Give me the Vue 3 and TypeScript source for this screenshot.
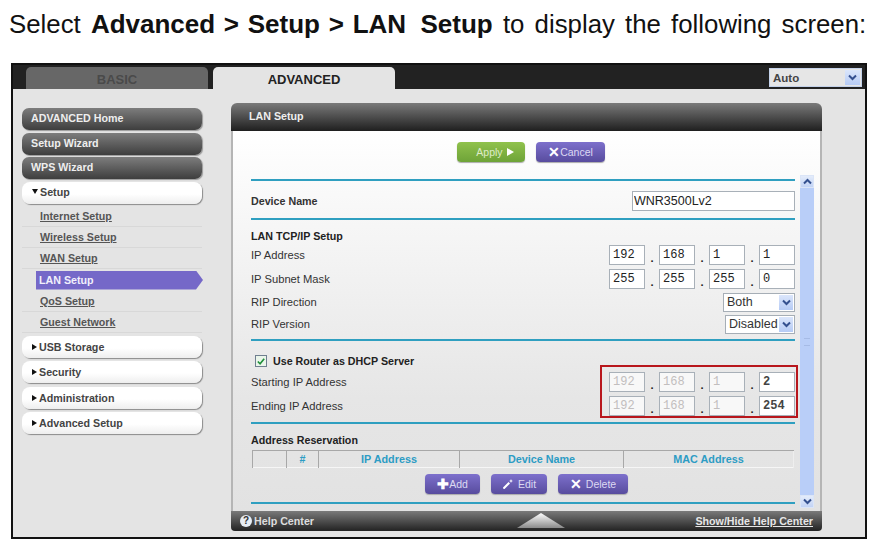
<script setup lang="ts">
const topLinks = ['ADVANCED Home', 'Setup Wizard', 'WPS Wizard']
const subLinks = ['Internet Setup', 'Wireless Setup', 'WAN Setup', 'LAN Setup', 'QoS Setup', 'Guest Network']
const closedGroups = ['USB Storage', 'Security', 'Administration', 'Advanced Setup']
const columns = ['', '#', 'IP Address', 'Device Name', 'MAC Address']

const ipRows = [
  { label: 'IP Address', octets: ['192', '168', '1', '1'] },
  { label: 'IP Subnet Mask', octets: ['255', '255', '255', '0'] }
]
const dhcpRows = [
  { label: 'Starting IP Address', octets: ['192', '168', '1', '2'] },
  { label: 'Ending IP Address', octets: ['192', '168', '1', '254'] }
]
const selectRows = [
  { label: 'RIP Direction', value: 'Both', width: 72 },
  { label: 'RIP Version', value: 'Disabled', width: 70 }
]
</script>

<template>
  <div class="page">
    <p class="intro">Select <b>Advanced &gt; Setup &gt; <span class="tight">LAN&nbsp; Setup</span></b> to display the following screen:</p>

    <div class="frame">
      <div class="topbar">
        <div class="tab tab-off">BASIC</div>
        <div class="tab tab-on">ADVANCED</div>
        <div class="lang">
          <span>Auto</span>
          <span class="chev"><svg width="9" height="7" viewBox="0 0 9 7"><path d="M1 1.5 4.5 5 8 1.5" fill="none" stroke="#34508f" stroke-width="2" /></svg></span>
        </div>
      </div>

      <div class="main">
        <nav class="side">
          <a v-for="l in topLinks" :key="l" class="pill-dark">{{ l }}</a>
          <div class="pill-light"><i class="arrow-down"></i>Setup</div>
          <ul class="subs">
            <li v-for="s in subLinks" :key="s" :class="{ current: s === 'LAN Setup' }">
              <span>{{ s }}</span>
            </li>
          </ul>
          <div v-for="g in closedGroups" :key="g" class="pill-light closed"><i class="arrow-right"></i>{{ g }}</div>
        </nav>

        <section class="panel">
          <header class="panel-head">LAN Setup</header>
          <div class="panel-body">
            <div class="actions">
              <button type="button" class="btn btn-green">Apply <i class="play"></i></button>
              <button type="button" class="btn btn-purple cancel"><b>✕</b>Cancel</button>
            </div>

            <div class="scroll-wrap">
              <div class="form">
                <hr class="rule first" />
                <div class="row device">
                  <strong>Device Name</strong>
                  <input class="device-input" value="WNR3500Lv2" readonly />
                </div>
                <hr class="rule" />
                <strong class="heading tcp">LAN TCP/IP Setup</strong>
                <div v-for="r in ipRows" :key="r.label" class="row ip-row">
                  <span>{{ r.label }}</span>
                  <div class="ip">
                    <template v-for="(o, i) in r.octets" :key="i">
                      <span v-if="i > 0" class="dot">.</span>
                      <input class="octet" :value="o" readonly />
                    </template>
                  </div>
                </div>
                <div v-for="r in selectRows" :key="r.label" class="row sel-row">
                  <span>{{ r.label }}</span>
                  <div class="select" :style="{ width: r.width + 'px' }">
                    <span>{{ r.value }}</span>
                    <span class="chev"><svg width="9" height="7" viewBox="0 0 9 7"><path d="M1 1.5 4.5 5 8 1.5" fill="none" stroke="#34508f" stroke-width="2" /></svg></span>
                  </div>
                </div>
                <hr class="rule dhcp-rule" />
                <div class="check-row">
                  <span class="check"><svg width="11" height="11" viewBox="0 0 11 11"><path d="M2 5.5 4.5 8 9 2.5" fill="none" stroke="#1f8f3a" stroke-width="1.8" /></svg></span>
                  <strong>Use Router as DHCP Server</strong>
                </div>
                <div class="dhcp">
                  <div v-for="r in dhcpRows" :key="r.label" class="row ip-row">
                    <span>{{ r.label }}</span>
                    <div class="ip">
                      <template v-for="(o, i) in r.octets" :key="i">
                        <span v-if="i > 0" class="dot">.</span>
                        <input class="octet" :class="{ off: i < 3, on: i === 3 }" :value="o" readonly />
                      </template>
                    </div>
                  </div>
                  <div class="redbox"></div>
                </div>
                <hr class="rule res-rule" />
                <strong class="heading res">Address Reservation</strong>
                <div class="table">
                  <div v-for="c in columns" :key="c" class="cell">{{ c }}</div>
                </div>
                <div class="res-btns">
                  <button type="button" class="btn btn-purple add"><b>✚</b>Add</button>
                  <button type="button" class="btn btn-purple edit">
                    <svg width="12" height="12" viewBox="0 0 12 12"><path d="M1.5 11 1 9.5 6.5 4 8 5.5 2.5 11Z M9 1l.6 1.4L11 3 9.6 3.6 9 5 8.4 3.6 7 3l1.4-.6Z" fill="#fff" /></svg>
                    Edit
                  </button>
                  <button type="button" class="btn btn-purple del"><b>✕</b>Delete</button>
                </div>
                <hr class="rule last" />
              </div>

              <div class="scrollbar">
                <span class="sb-btn"><svg width="9" height="7" viewBox="0 0 9 7"><path d="M1 5.5 4.5 2 8 5.5" fill="none" stroke="#34508f" stroke-width="2" /></svg></span>
                <span class="sb-thumb"><i></i></span>
                <span class="sb-btn"><svg width="9" height="7" viewBox="0 0 9 7"><path d="M1 1.5 4.5 5 8 1.5" fill="none" stroke="#34508f" stroke-width="2" /></svg></span>
              </div>
            </div>
          </div>

          <footer class="panel-foot">
            <span class="help"><i>?</i>Help Center</span>
            <svg class="peak" width="48" height="16" viewBox="0 0 48 16"><defs><linearGradient id="pk" x1="0" y1="0" x2="0" y2="1"><stop offset="0" stop-color="#fff" /><stop offset="1" stop-color="#8a8a8a" /></linearGradient></defs><path d="M0 16 24 1 48 16Z" fill="url(#pk)" /></svg>
            <a class="toggle">Show/Hide Help Center</a>
          </footer>
        </section>
      </div>
    </div>
  </div>
</template>

<style scoped>
.page {
  width: 883px;
  height: 548px;
  overflow: hidden;
  background: #fff;
  font-family: "Liberation Sans", Arial, sans-serif;
  font-size: 11.2px;
  color: #333;
}

.page strong {
  font-size: 10.7px;
}

.intro {
  margin: 0;
  height: 63px;
  padding: 10px 0 0 9px;
  box-sizing: border-box;
  font-size: 25.8px;
  line-height: 28px;
  color: #111;
  white-space: nowrap;
  word-spacing: 3px;
}

.intro b {
  font-size: 26px;
  word-spacing: 1.5px;
}

.tight {
  word-spacing: 0;
}

.frame {
  width: 856px;
  height: 476px;
  margin-left: 11px;
  box-sizing: border-box;
  border: 2px solid #111;
  display: flex;
  flex-direction: column;
}

.topbar {
  height: 24px;
  flex: none;
  background: #222;
  display: flex;
  align-items: flex-end;
  padding-left: 13px;
  gap: 5px;
  position: relative;
}

.tab {
  width: 182px;
  height: 22px;
  border-radius: 5px 5px 0 0;
  text-align: center;
  font-weight: bold;
  font-size: 13px;
  line-height: 25px;
}

.tab-off {
  background: #676767;
  color: #4a4a4a;
}

.tab-on {
  background: #e4e4e4;
  color: #222;
}

.lang {
  margin-left: auto;
  margin-right: 3px;
  margin-bottom: 2px;
  width: 93px;
  height: 19px;
  background: #e6e6e6;
  border: 1px solid #c4d2ea;
  box-sizing: border-box;
  display: flex;
  align-items: center;
  justify-content: space-between;
  padding: 0 1px 0 3px;
  font-weight: bold;
  font-size: 11.5px;
  color: #444;
}

.chev {
  width: 15px;
  height: 15px;
  background: linear-gradient(#dbe6fb, #b6cbf5);
  display: flex;
  align-items: center;
  justify-content: center;
  flex: none;
}

.main {
  flex: 1;
  background: #e4e4e4;
  display: flex;
  padding: 14px 0 0 9px;
  min-height: 0;
}

.side {
  width: 180px;
  flex: none;
  margin-top: 5px;
  display: flex;
  flex-direction: column;
  font-size: 10.7px;
}

.pill-dark {
  height: 22px;
  margin-bottom: 2.5px;
  border-radius: 7px;
  background: linear-gradient(#7d7d7d, #3e3e3e);
  box-shadow: 1px 1px 1px #999;
  color: #eee;
  font-weight: bold;
  line-height: 20px;
  padding-left: 9px;
}

.pill-light {
  height: 22px;
  border-radius: 8px;
  background: linear-gradient(#fff 55%, #eee);
  box-shadow: 1px 1px 1px #8a8a8a;
  color: #444;
  font-weight: bold;
  padding: 0 0 2px 10px;
  box-sizing: border-box;
  display: flex;
  align-items: center;
}

.pill-light.closed {
  margin-bottom: 3.3px;
  padding-bottom: 0;
}

.arrow-down {
  width: 0;
  height: 0;
  border: 3.5px solid transparent;
  border-top: 5px solid #111;
  border-bottom: 0;
  margin-right: 2px;
}

.arrow-right {
  width: 0;
  height: 0;
  border: 3.5px solid transparent;
  border-left: 5px solid #111;
  border-right: 0;
  margin-right: 2px;
}

.subs {
  list-style: none;
  margin: 2px 0 3.5px;
  padding: 0;
}

.subs li {
  height: 21px;
  line-height: 21px;
  padding-left: 18px;
  border-bottom: 1px solid #d8d8d8;
  box-sizing: border-box;
  font-weight: bold;
  color: #555;
  text-decoration: underline;
}

.subs li.current {
  margin-left: 14px;
  margin-right: -1px;
  padding-left: 3px;
  height: 19px;
  line-height: 18px;
  margin-top: 2px;
  margin-bottom: 1px;
  border: 0;
  color: #f1effb;
  text-decoration: none;
  background: #7568c8;
  clip-path: polygon(0 0, 160px 0, 100% 50%, 160px 100%, 0 100%);
}

.panel {
  width: 591px;
  margin-left: 29px;
  height: 428px;
  display: flex;
  flex-direction: column;
}

.panel-head {
  height: 28px;
  flex: none;
  border-radius: 6px 6px 0 0;
  background: linear-gradient(#7a7a7a, #1f1f1f);
  color: #eee;
  font-weight: bold;
  font-size: 10.7px;
  line-height: 27px;
  padding-left: 18px;
}

.panel-body {
  flex: 1;
  min-height: 0;
  display: flex;
  flex-direction: column;
  background: linear-gradient(#fff, #e6e6e6 70%, #e2e2e2);
  border: solid #b5b5b5;
  border-width: 0 2px;
}

.actions {
  height: 44px;
  flex: none;
  display: flex;
  padding: 11px 0 0 224px;
  gap: 11px;
  box-sizing: border-box;
}

.btn {
  height: 20px;
  border: 0;
  border-radius: 4px;
  padding: 0;
  color: #ddd9f2;
  font: 10.5px "Liberation Sans", Arial, sans-serif;
  display: inline-flex;
  align-items: center;
  justify-content: center;
  box-shadow: 0 1px 1px #aaa;
}

.btn b {
  color: #fff;
  font-size: 14px;
  line-height: 1;
}

.btn-green {
  width: 68px;
  background: linear-gradient(#90c24c, #6ea338);
  color: #dfecc8;
  padding-left: 8px;
}

.btn-purple {
  background: linear-gradient(#7d70cc, #584c9e);
}

.cancel {
  width: 69px;
}

.play {
  width: 0;
  height: 0;
  margin-left: 4px;
  border: 4px solid transparent;
  border-left: 7px solid #fff;
  border-right: 0;
}

.scroll-wrap {
  flex: 1;
  min-height: 0;
  display: flex;
  padding-left: 18px;
}

.form {
  width: 544px;
  flex: none;
  display: flex;
  flex-direction: column;
}

.rule {
  width: 100%;
  height: 2px;
  margin: 0;
  flex: none;
  border: 0;
  background: #2f9fc0;
}

.rule.first {
  margin-top: 4px;
}

.row {
  display: flex;
  align-items: center;
  justify-content: space-between;
}

.device {
  height: 37px;
  padding-top: 2px;
  box-sizing: border-box;
}

.device-input {
  width: 163px;
  height: 20px;
  box-sizing: border-box;
  border: 1px solid #a8b0b8;
  background: #fff;
  padding: 0 1px;
  font: 12.5px "Liberation Sans", Arial, sans-serif;
  color: #222;
  outline: none;
}

.heading {
  display: block;
  color: #222;
}

.tcp {
  height: 14px;
  margin-top: 9px;
  line-height: 14px;
}

.ip-row {
  height: 24px;
}

.ip {
  display: flex;
  align-items: center;
}

.octet {
  width: 36px;
  height: 20px;
  box-sizing: border-box;
  border: 1px solid #a8b0b8;
  background: #fff;
  padding: 0 3px;
  font: 12px "Liberation Mono", monospace;
  color: #222;
  outline: none;
}

.octet.off {
  color: #c2bebe;
  background: #f8f8f8;
}

.octet.on {
  font-weight: bold;
  color: #444;
}

.dot {
  width: 14px;
  text-align: center;
  font-weight: bold;
  align-self: flex-end;
  line-height: 14px;
  color: #222;
}

.sel-row {
  height: 22px;
}

.select {
  height: 19px;
  box-sizing: border-box;
  background: #fff;
  border: 1px solid #a6aeb6;
  display: flex;
  align-items: center;
  justify-content: space-between;
  padding: 0 1px 0 3px;
  font-size: 12.5px;
  color: #333;
}

.select .chev {
  width: 14px;
  height: 15px;
}

.dhcp-rule {
  margin-top: 4px;
}

.check-row {
  height: 18px;
  margin-top: 11px;
  display: flex;
  align-items: center;
  gap: 6px;
  padding-left: 4px;
  color: #222;
}

.check {
  width: 12px;
  height: 12px;
  box-sizing: border-box;
  border: 1px solid #6f7f8f;
  background: #eaf5ea;
  display: flex;
  align-items: center;
  justify-content: center;
}

.dhcp {
  position: relative;
}

.redbox {
  position: absolute;
  left: 349px;
  right: -3px;
  top: -5px;
  bottom: 0;
  border: 2px solid #b8161c;
  pointer-events: none;
}

.res-rule {
  margin-top: 4px;
}

.res {
  margin-top: 9px;
  height: 14px;
  line-height: 14px;
}

.table {
  margin: 3px 1px 0;
  height: 18px;
  display: grid;
  grid-template-columns: 34px 32px 141px 164px 1fr;
  border-top: 1px solid #a8a8a8;
  border-bottom: 1px solid #f6f6f6;
  box-sizing: border-box;
  font-size: 10.8px;
}

.cell {
  border-left: 1px solid #a8a8a8;
  text-align: center;
  font-weight: bold;
  color: #2d9cc4;
  line-height: 17px;
}

.cell:last-child {
  border-right: 1px solid #eee;
}

.res-btns {
  margin-top: 6px;
  height: 20px;
  display: flex;
  gap: 11px;
  padding-left: 174px;
}

.add {
  width: 55px;
}

.edit {
  width: 56px;
  gap: 4px;
}

.del {
  width: 70px;
  gap: 4px;
}

.last {
  margin-top: 8px;
}

.scrollbar {
  width: 14px;
  margin-left: 5px;
  display: flex;
  flex-direction: column;
  flex: none;
  height: 333px;
}

.sb-btn {
  height: 13px;
  flex: none;
  background: linear-gradient(#e4ecfb, #c2d3f5);
  border: 1px solid #dbe5f7;
  box-sizing: border-box;
  display: flex;
  align-items: center;
  justify-content: center;
}

.sb-thumb {
  flex: 1;
  background: #b9cef8;
  display: flex;
  align-items: center;
  justify-content: center;
}

.sb-thumb i {
  width: 6px;
  height: 6px;
  border: solid #a6bbe6;
  border-width: 1px 0;
}

.panel-foot {
  height: 20px;
  flex: none;
  margin-top: -1px;
  position: relative;
  border-radius: 0 0 4px 4px;
  background: linear-gradient(#7a7a7a, #222);
  color: #ddd;
  font-weight: bold;
  font-size: 10.7px;
  display: flex;
  align-items: center;
  justify-content: space-between;
  padding: 0 9px 0 9px;
}

.help {
  display: flex;
  align-items: center;
  gap: 2px;
}

.help i {
  width: 12px;
  height: 12px;
  border-radius: 50%;
  background: #e8eef5;
  color: #333;
  font-style: normal;
  font-size: 10px;
  line-height: 12px;
  text-align: center;
}

.peak {
  position: absolute;
  left: 286px;
  bottom: 3px;
}

.toggle {
  color: #e6e6e6;
  text-decoration: underline;
}
</style>
